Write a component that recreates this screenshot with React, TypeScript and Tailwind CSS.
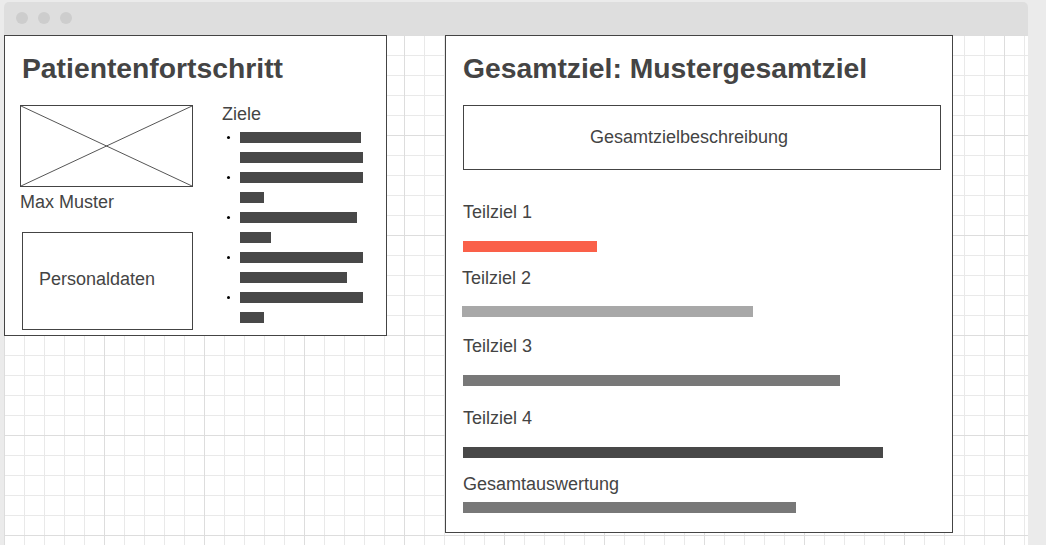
const goalBars: [number, number][] = [
  [121, 123],
  [123, 24],
  [117, 31],
  [123, 107],
  [123, 24],
];

const parts = [
  { label: "Teilziel 1", labelClass: "mt-[31px]", barClass: "mt-[18px] bg-[#fa6049]", width: 134 },
  { label: "Teilziel 2", labelClass: "mt-[15px] -ml-[1px]", barClass: "mt-[17px] -ml-[1px] bg-[#a8a8a8]", width: 291 },
  { label: "Teilziel 3", labelClass: "mt-[18px]", barClass: "mt-[18px] bg-[#787878]", width: 377 },
  { label: "Teilziel 4", labelClass: "mt-[21px]", barClass: "mt-[18px] bg-[#484848]", width: 420 },
  { label: "Gesamtauswertung", labelClass: "mt-[15px]", barClass: "mt-[7px] bg-[#787878]", width: 333 },
];

function Placeholder() {
  return (
    <div className="h-[82px] w-[173px] border border-[#444]">
      <svg className="h-full w-full" viewBox="0 0 171 80" preserveAspectRatio="none">
        <line x1="0" y1="0" x2="171" y2="80" stroke="#555" strokeWidth="1" />
        <line x1="171" y1="0" x2="0" y2="80" stroke="#555" strokeWidth="1" />
      </svg>
    </div>
  );
}

function PatientCard() {
  return (
    <section className="h-[301px] w-[383px] shrink-0 border border-[#444] bg-white px-[15px] pt-[16px]">
      <h1 className="ml-[2px] text-[28.3px] font-bold leading-[32px]">Patientenfortschritt</h1>
      <div className="mt-[19px] flex items-start">
        <div className="flex flex-col pt-[2px]">
          <Placeholder />
          <div className="mt-[4px] text-[18px] leading-[22px]">Max Muster</div>
          <div className="mt-[19px] ml-[2px] flex h-[98px] w-[171px] items-center border border-[#444] pb-[4px] pl-[16px] text-[18px]">
            Personaldaten
          </div>
        </div>
        <div className="ml-[29px] flex flex-col">
          <div className="text-[18px] leading-[22px]">Ziele</div>
          <ul className="mt-[7px] flex flex-col gap-[9px]">
            {goalBars.map(([a, b], i) => (
              <li key={i} className="flex flex-col gap-[9px]">
                <div className="flex items-center">
                  <span className="ml-[5px] h-[3px] w-[3px] rounded-full bg-black" />
                  <span className="ml-[10px] h-[11px] bg-[#484848]" style={{ width: a }} />
                </div>
                <span className="ml-[18px] h-[11px] bg-[#484848]" style={{ width: b }} />
              </li>
            ))}
          </ul>
        </div>
      </div>
    </section>
  );
}

function GoalCard() {
  return (
    <section className="h-[498px] w-[508px] shrink-0 border border-[#444] bg-white px-[17px] pt-[16px]">
      <h1 className="text-[28.3px] font-bold leading-[32px]">Gesamtziel: Mustergesamtziel</h1>
      <div className="mt-[21px] flex h-[65px] w-[478px] items-center justify-center border border-[#444] pr-[26px] text-[18px]">
        Gesamtzielbeschreibung
      </div>
      {parts.map((p) => (
        <div key={p.label} className="flex flex-col">
          <div className={`text-[18px] leading-[22px] ${p.labelClass}`}>{p.label}</div>
          <div className={`h-[11px] ${p.barClass}`} style={{ width: p.width }} />
        </div>
      ))}
    </section>
  );
}

export default function App() {
  return (
    <div className="h-[545px] w-full overflow-hidden bg-[#ebebeb] pt-[2px] pl-[4px] font-['Liberation_Sans',Arial,sans-serif] text-[#444]">
      <div className="w-[1024px] overflow-hidden rounded-t-[5px]">
        <div className="flex h-[33px] items-center gap-[10px] bg-[#dedede] pb-[1px] pl-[12px]">
          <span className="h-[12px] w-[12px] rounded-full bg-[#cdcdcd]" />
          <span className="h-[12px] w-[12px] rounded-full bg-[#cdcdcd]" />
          <span className="h-[12px] w-[12px] rounded-full bg-[#cdcdcd]" />
        </div>
        <main className="flex h-[510px] items-start gap-[58px] bg-white bg-[image:linear-gradient(to_right,#dddddd_1px,transparent_1px),linear-gradient(to_bottom,#dddddd_1px,transparent_1px),linear-gradient(to_right,#e9e9e9_1px,transparent_1px),linear-gradient(to_bottom,#e9e9e9_1px,transparent_1px)] bg-[size:100px_100px,100px_100px,20px_20px,20px_20px]">
          <PatientCard />
          <GoalCard />
        </main>
      </div>
    </div>
  );
}
